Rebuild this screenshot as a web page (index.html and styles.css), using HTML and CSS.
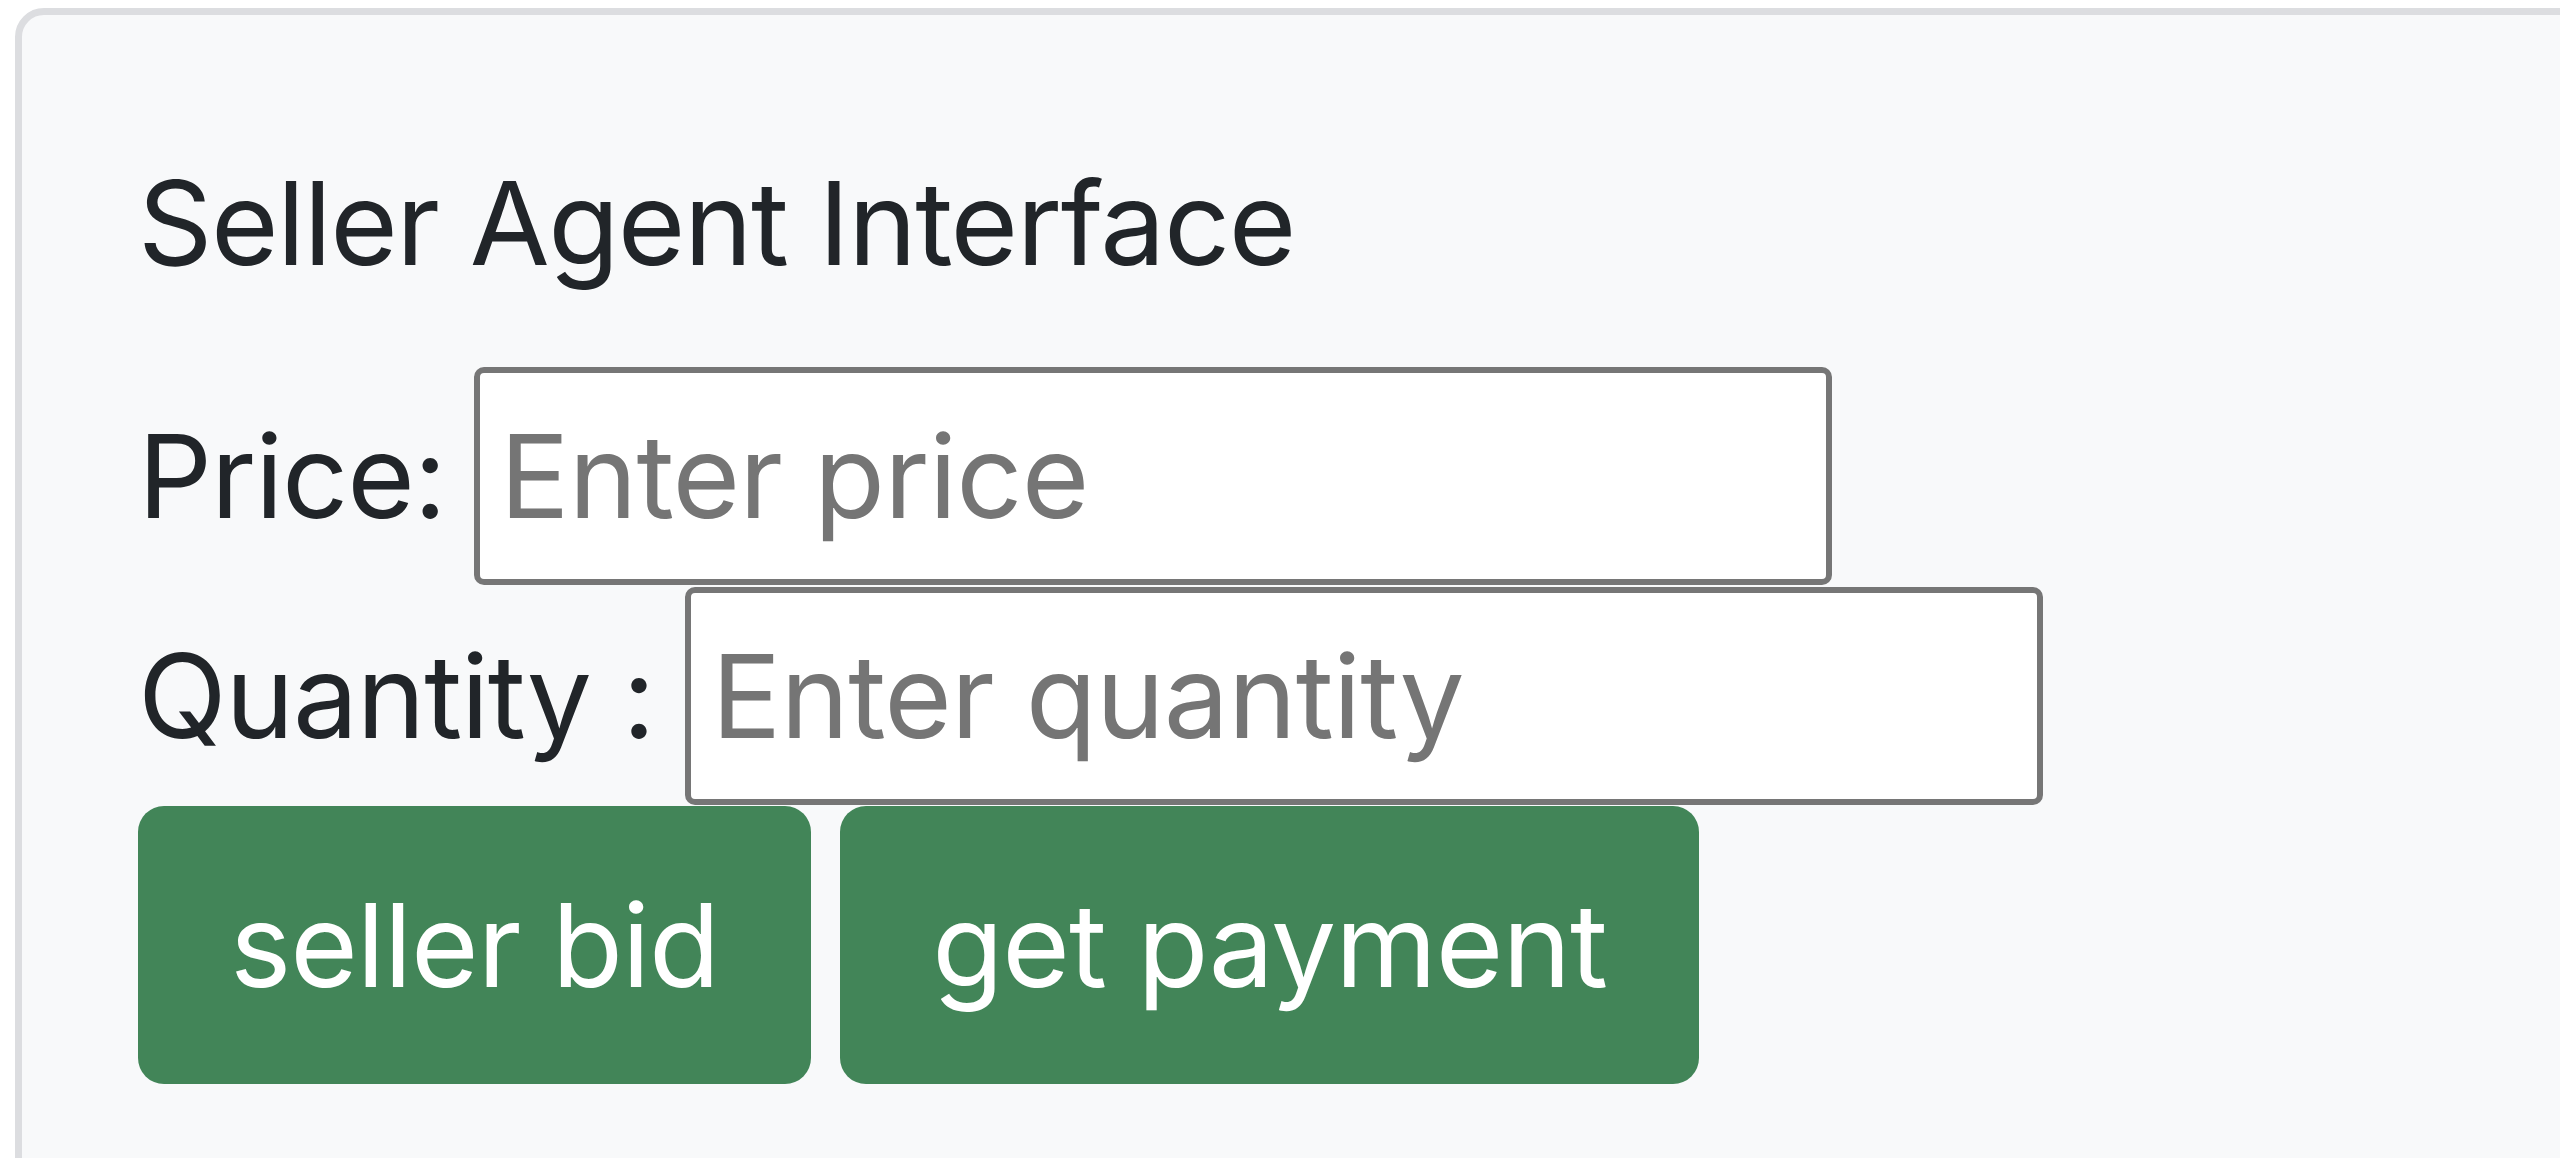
FILE: index.html
```html
<!DOCTYPE html>
<html lang="en">
<head>
<meta charset="utf-8">
<title>Seller Agent Interface</title>
<link rel="stylesheet" href="styles.css">
</head>
<body>
<div class="card">
  <div class="card-body">
    <div class="title">Seller Agent Interface</div>
    <div class="field field-price">
      <label class="field-label" for="price">Price:</label>
      <input class="field-input" id="price" type="text" placeholder="Enter price">
    </div>
    <div class="field field-qty">
      <label class="field-label" for="qty">Quantity :</label>
      <input class="field-input" id="qty" type="text" placeholder="Enter quantity">
    </div>
    <div class="actions">
      <button class="btn" type="button">seller bid</button>
      <button class="btn" type="button">get payment</button>
    </div>
  </div>
</div>
</body>
</html>
```
FILE: styles.css
```css
html, body {
  margin: 0;
  height: 100%;
  overflow: hidden;
  background: #ffffff;
}

body {
  font-family: Inter, "Liberation Sans", sans-serif;
  color: #212529;
}

.card {
  box-sizing: border-box;
  margin: 8px 0 0 15px;
  width: 2700px;
  height: 1300px;
  border: 7px solid #dcdde0;
  border-radius: 29px;
  background: #f8f9fa;
}

.card-body {
  padding: 116px;
}

.title {
  font-size: 116px;
  line-height: 174px;
  letter-spacing: -1.5px;
  padding-top: 5px;
  margin-bottom: -5px;
}

.field {
  display: flex;
  align-items: center;
  height: 218px;
}

.field-price {
  margin-top: 62px;
}

.field-qty {
  margin-top: 2px;
}

.field-label {
  font-size: 116px;
  line-height: 174px;
  letter-spacing: -1.2px;
  margin-right: 28px;
}

.field-qty .field-label {
  margin-right: 31px;
}

.field-input {
  box-sizing: border-box;
  width: 1358px;
  height: 218px;
  margin: 0;
  border: 6px solid #767676;
  border-radius: 10px;
  padding: 0 0 0 20px;
  background: #ffffff;
  font-family: Inter, "Liberation Sans", sans-serif;
  font-size: 116px;
  line-height: 174px;
  letter-spacing: -0.8px;
  color: #212529;
  outline: none;
}

.field-input::placeholder {
  color: #757575;
}

.actions {
  display: flex;
  gap: 29px;
  margin-top: 1px;
}

.btn {
  height: 278px;
  padding: 0 92px;
  border: 0;
  border-radius: 26px;
  background: #428558;
  color: #ffffff;
  font-family: Inter, "Liberation Sans", sans-serif;
  font-size: 116px;
  line-height: 174px;
  letter-spacing: -1px;
}
```
